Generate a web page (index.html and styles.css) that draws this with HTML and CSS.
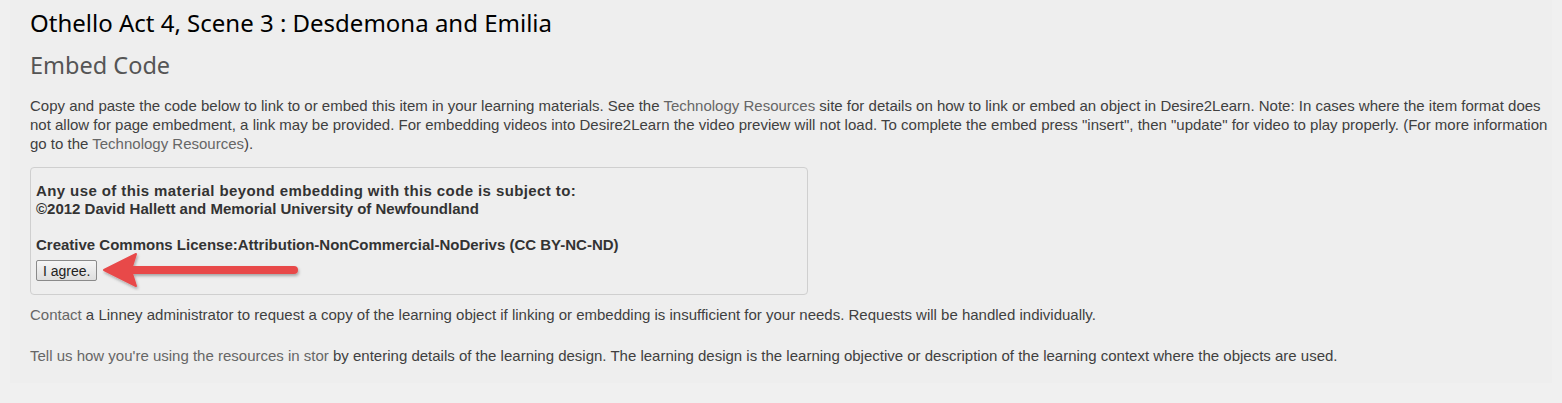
FILE: index.html
```html
<!DOCTYPE html>
<html>
<head>
<meta charset="utf-8">
<link rel="stylesheet" href="styles.css">
</head>
<body>
<div class="panel">
  <h1 class="title">Othello Act 4, Scene 3 : Desdemona and Emilia</h1>
  <h2 class="subtitle">Embed Code</h2>
  <p class="intro">Copy and paste the code below to link to or embed this item in your learning materials. See the <a class="link">Technology Resources</a> site for details on how to link or embed an object in Desire2Learn. Note: In cases where the item format does not allow for page embedment, a link may be provided. For embedding videos into Desire2Learn the video preview will not load. To complete the embed press "insert", then "update" for video to play properly. (For more information go to the <a class="link">Technology Resources</a>).</p>
  <div class="license">
    <p class="license-text"><span class="wide">Any use of this material beyond embedding with this code is subject to:</span><br>©2012 David Hallett and Memorial University of Newfoundland</p>
    <p class="license-text">Creative Commons License:Attribution-NonCommercial-NoDerivs (CC BY-NC-ND)</p>
    <div class="agree-row">
      <button class="agree">I agree.</button>
      <svg class="arrow" width="200" height="40" viewBox="0 0 200 40">
        <defs>
          <filter id="sh" x="-10%" y="-30%" width="120%" height="160%">
            <feDropShadow dx="1" dy="2" stdDeviation="1.5" flood-color="#000" flood-opacity="0.3"/>
          </filter>
        </defs>
        <g filter="url(#sh)">
          <line x1="28" y1="19" x2="192" y2="19" stroke="#e8494a" stroke-width="8" stroke-linecap="round"/>
          <path d="M2 19 L34 3 L29 19 L34 35 Z" fill="#e8494a" stroke="#e8494a" stroke-width="2" stroke-linejoin="round"/>
        </g>
      </svg>
    </div>
  </div>
  <p class="note"><a class="link">Contact</a> a Linney administrator to request a copy of the learning object if linking or embedding is insufficient for your needs. Requests will be handled individually.</p>
  <p class="note"><a class="link">Tell us how you're using the resources in stor</a> by entering details of the learning design. The learning design is the learning objective or description of the learning context where the objects are used.</p>
</div>
</body>
</html>
```
FILE: styles.css
```css
html, body {
  margin: 0;
  padding: 0;
  background: #f0f0f0;
}
.panel {
  margin: 0 10px;
  padding: 8px 2px 18px 20px;
  background: #eeeeee;
  font-family: "Liberation Sans", Arial, sans-serif;
  font-size: 15px;
  color: #404040;
}
.title {
  margin: 0;
  font-family: "Noto Sans", sans-serif;
  font-weight: 400;
  font-size: 24px;
  line-height: 30px;
  color: #000;
}
.subtitle {
  margin: 12px 0 0 0;
  font-family: "Noto Sans", sans-serif;
  font-weight: 400;
  font-size: 23.5px;
  line-height: 30px;
  color: #555;
}
.intro {
  margin: 16px 0 0 0;
  line-height: 19px;
}
.link {
  color: #666;
  text-decoration: none;
}
.license {
  margin-top: 14px;
  width: 766px;
  border: 1px solid #cfcfcf;
  border-radius: 4px;
  padding: 14px 5px 13px 5px;
  background: #eeeeee;
}
.license-text {
  margin: 0 0 18px 0;
  font-weight: bold;
  line-height: 18px;
  color: #333;
}
.license-text + .license-text {
  margin-bottom: 6px;
}
.wide {
  letter-spacing: 0.4px;
}
.agree-row {
  display: flex;
  align-items: center;
  height: 21px;
}
.agree {
  font-family: "Liberation Sans", Arial, sans-serif;
  font-size: 14px;
  color: #222;
  padding: 0 6px;
  height: 21px;
  border: 1px solid #8a8a8a;
  border-radius: 2px;
  background: linear-gradient(#f6f6f6, #dedede);
}
.arrow {
  margin-left: 5px;
  flex: none;
}
.note {
  margin: 10px 0 0 0;
  line-height: 19px;
}
.note + .note {
  margin-top: 22px;
}
```
